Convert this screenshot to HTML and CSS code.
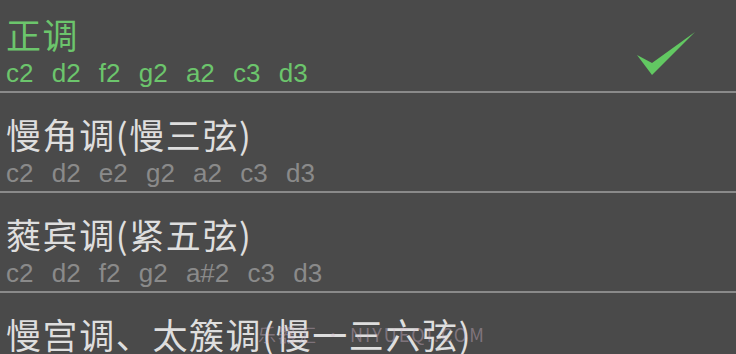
FILE: index.html
```html
<!DOCTYPE html>
<html lang="zh">
<head>
<meta charset="utf-8">
<link rel="stylesheet" href="styles.css">
</head>
<body>
<div class="screen">
  <ul class="list">
    <li class="row selected">
      <div class="text">
        <div class="title">正调</div>
        <div class="notes">c2 d2 f2 g2 a2 c3 d3</div>
      </div>
      <svg class="check" width="60" height="46" viewBox="0 0 60 46"><polygon points="1,24 16,44 59,1 16,32" fill="#62c862"/></svg>
    </li>
    <li class="row">
      <div class="text">
        <div class="title">慢角调(慢三弦)</div>
        <div class="notes">c2 d2 e2 g2 a2 c3 d3</div>
      </div>
    </li>
    <li class="row">
      <div class="text">
        <div class="title">蕤宾调(紧五弦)</div>
        <div class="notes">c2 d2 f2 g2 a#2 c3 d3</div>
      </div>
    </li>
    <li class="row">
      <div class="text">
        <div class="title">慢宫调、太簇调(慢一三六弦)</div>
        <div class="notes">c2 d2 f2 g2 a2 c3 d3</div>
      </div>
    </li>
  </ul>
  <div class="watermark">乐器汇 • NIYUEQI.COM</div>
</div>
</body>
</html>
```
FILE: styles.css
```css
html, body {
  margin: 0;
  padding: 0;
  background: #4a4a4a;
}
.screen {
  position: relative;
  width: 736px;
  height: 354px;
  overflow: hidden;
  background: #4a4a4a;
}
.list {
  list-style: none;
  margin: -7px 0 0 0;
  padding: 0;
}
.row {
  height: 77px;
  padding: 21px 0 0 6px;
  border-bottom: 2px solid #8a8a8a;
  display: flex;
  align-items: flex-start;
}
.text {
  flex: 1;
  display: flex;
  flex-direction: column;
}
.title {
  font-family: "Noto Sans CJK SC", "Noto Sans", sans-serif;
  font-size: 35px;
  line-height: 40px;
  color: #dedede;
  letter-spacing: 1.6px;
  white-space: nowrap;
}
.notes {
  margin-top: 4px;
  font-family: "Liberation Sans", Arial, sans-serif;
  font-size: 26px;
  line-height: 30px;
  color: #8a8a8a;
  word-spacing: 11px;
  white-space: nowrap;
}
.selected .title,
.selected .notes {
  color: #6cc56c;
}
.check {
  margin: 17px 40px 0 0;
  flex: none;
}
.watermark {
  position: absolute;
  left: 258px;
  top: 323px;
  font-family: "Noto Sans CJK SC", "Liberation Sans", sans-serif;
  font-size: 18px;
  line-height: 22px;
  letter-spacing: 2px;
  color: rgba(215, 185, 205, 0.4);
}
```
